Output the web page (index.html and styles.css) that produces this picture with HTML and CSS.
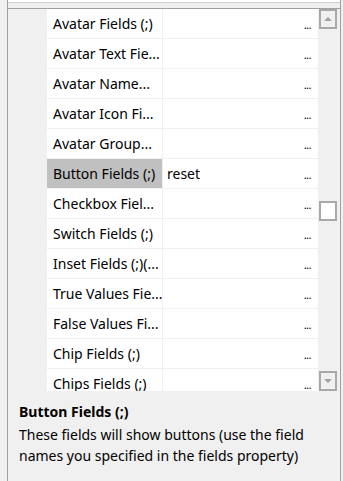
FILE: index.html
```html
<!DOCTYPE html>
<html>
<head>
  <title>Property Grid</title>
  <meta name="viewport" content="width=device-width, initial-scale=1">
  <link rel="stylesheet" href="styles.css">
</head>
<body>
  <div class="frame">
    <div class="toolbar"></div>

    <div class="grid">
      <div class="rows">
        <div class="row"><div class="name">Avatar Fields (;)</div><div class="value"><span class="dots">...</span></div></div>
        <div class="row"><div class="name">Avatar Text Fie...</div><div class="value"><span class="dots">...</span></div></div>
        <div class="row"><div class="name">Avatar Name...</div><div class="value"><span class="dots">...</span></div></div>
        <div class="row"><div class="name">Avatar Icon Fi...</div><div class="value"><span class="dots">...</span></div></div>
        <div class="row"><div class="name">Avatar Group...</div><div class="value"><span class="dots">...</span></div></div>
        <div class="row selected"><div class="name">Button Fields (;)</div><div class="value"><span class="text">reset</span><span class="dots">...</span></div></div>
        <div class="row"><div class="name">Checkbox Fiel...</div><div class="value"><span class="dots">...</span></div></div>
        <div class="row"><div class="name">Switch Fields (;)</div><div class="value"><span class="dots">...</span></div></div>
        <div class="row"><div class="name">Inset Fields (;)(...</div><div class="value"><span class="dots">...</span></div></div>
        <div class="row"><div class="name">True Values Fie...</div><div class="value"><span class="dots">...</span></div></div>
        <div class="row"><div class="name">False Values Fi...</div><div class="value"><span class="dots">...</span></div></div>
        <div class="row"><div class="name">Chip Fields (;)</div><div class="value"><span class="dots">...</span></div></div>
        <div class="row"><div class="name">Chips Fields (;)</div><div class="value"><span class="dots">...</span></div></div>
      </div>

      <div class="scrollbar">
        <div class="arrow up"><span></span></div>
        <div class="track"><div class="thumb"></div></div>
        <div class="arrow down"><span></span></div>
      </div>
    </div>

    <div class="help">
      <div class="help-title">Button Fields (;)</div>
      <div class="help-text">These fields will show buttons (use the field names you specified in the fields property)</div>
    </div>
  </div>
</body>
</html>
```

FILE: styles.css
```css
:root {
  --panel-bg: #f0f0f0;
  --frame-line: #a0a0a0;
  --grid-line: #f0f0f0;
  --selected-bg: #c0c0c0;
  --button-border: #a8a8a8;
  --arrow-color: #a0a0a0;
  --text-color: #000000;
  --font-family: 'Noto Sans', 'Open Sans', sans-serif;
}

html, body {
  margin: 0;
  padding: 0;
  height: 100%;
}

body {
  background-color: var(--panel-bg);
  color: var(--text-color);
  font-family: var(--font-family);
  font-size: 14px;
  overflow: hidden;
}

.frame {
  margin-left: 7px;
  width: 332px;
  height: 481px;
  border-left: 1px solid var(--frame-line);
  border-right: 1px solid var(--frame-line);
  display: flex;
  flex-direction: column;
}

.toolbar {
  height: 2px;
  background: #ffffff;
  border-bottom: 1px solid #cfcfcf;
  margin-bottom: 5px;
}

.grid {
  display: flex;
  height: 382px;
  border-top: 1px solid var(--frame-line);
  overflow: hidden;
}

.rows {
  flex: 1;
  padding-left: 39px;
  overflow: hidden;
}

.row {
  display: flex;
  height: 29px;
  border-bottom: 1px solid var(--grid-line);
  background: #ffffff;
}

.name {
  width: 109px;
  padding-left: 6px;
  border-right: 1px solid var(--grid-line);
  line-height: 29px;
  white-space: nowrap;
  overflow: hidden;
}

.value {
  flex: 1;
  display: flex;
  justify-content: space-between;
  padding: 0 7px 0 4px;
  line-height: 29px;
  white-space: nowrap;
}

.selected .name {
  background: var(--selected-bg);
}

.dots {
  margin-left: auto;
  font-size: 11px;
  letter-spacing: -0.5px;
  line-height: 31px;
}

.scrollbar {
  width: 22px;
  display: flex;
  flex-direction: column;
  align-items: flex-start;
  background: var(--panel-bg);
}

.arrow {
  width: 14px;
  height: 16px;
  margin-left: 1px;
  border: 2px solid var(--button-border);
  background: var(--panel-bg);
  display: flex;
  align-items: center;
  justify-content: center;
}

.arrow.down {
  margin-top: auto;
}

.arrow span {
  width: 0;
  height: 0;
  border-left: 4px solid transparent;
  border-right: 4px solid transparent;
}

.arrow.up span {
  border-bottom: 4px solid var(--arrow-color);
}

.arrow.down span {
  border-top: 4px solid var(--arrow-color);
}

.track {
  flex: 1;
  width: 100%;
}

.thumb {
  width: 14px;
  height: 16px;
  margin: 172px 0 0 1px;
  border: 2px solid var(--button-border);
  background: #ffffff;
}

.help {
  flex: 1;
  padding: 10px 10px 0 11px;
  line-height: 21px;
}

.help-title {
  font-weight: bold;
  margin-bottom: 2px;
}
```
